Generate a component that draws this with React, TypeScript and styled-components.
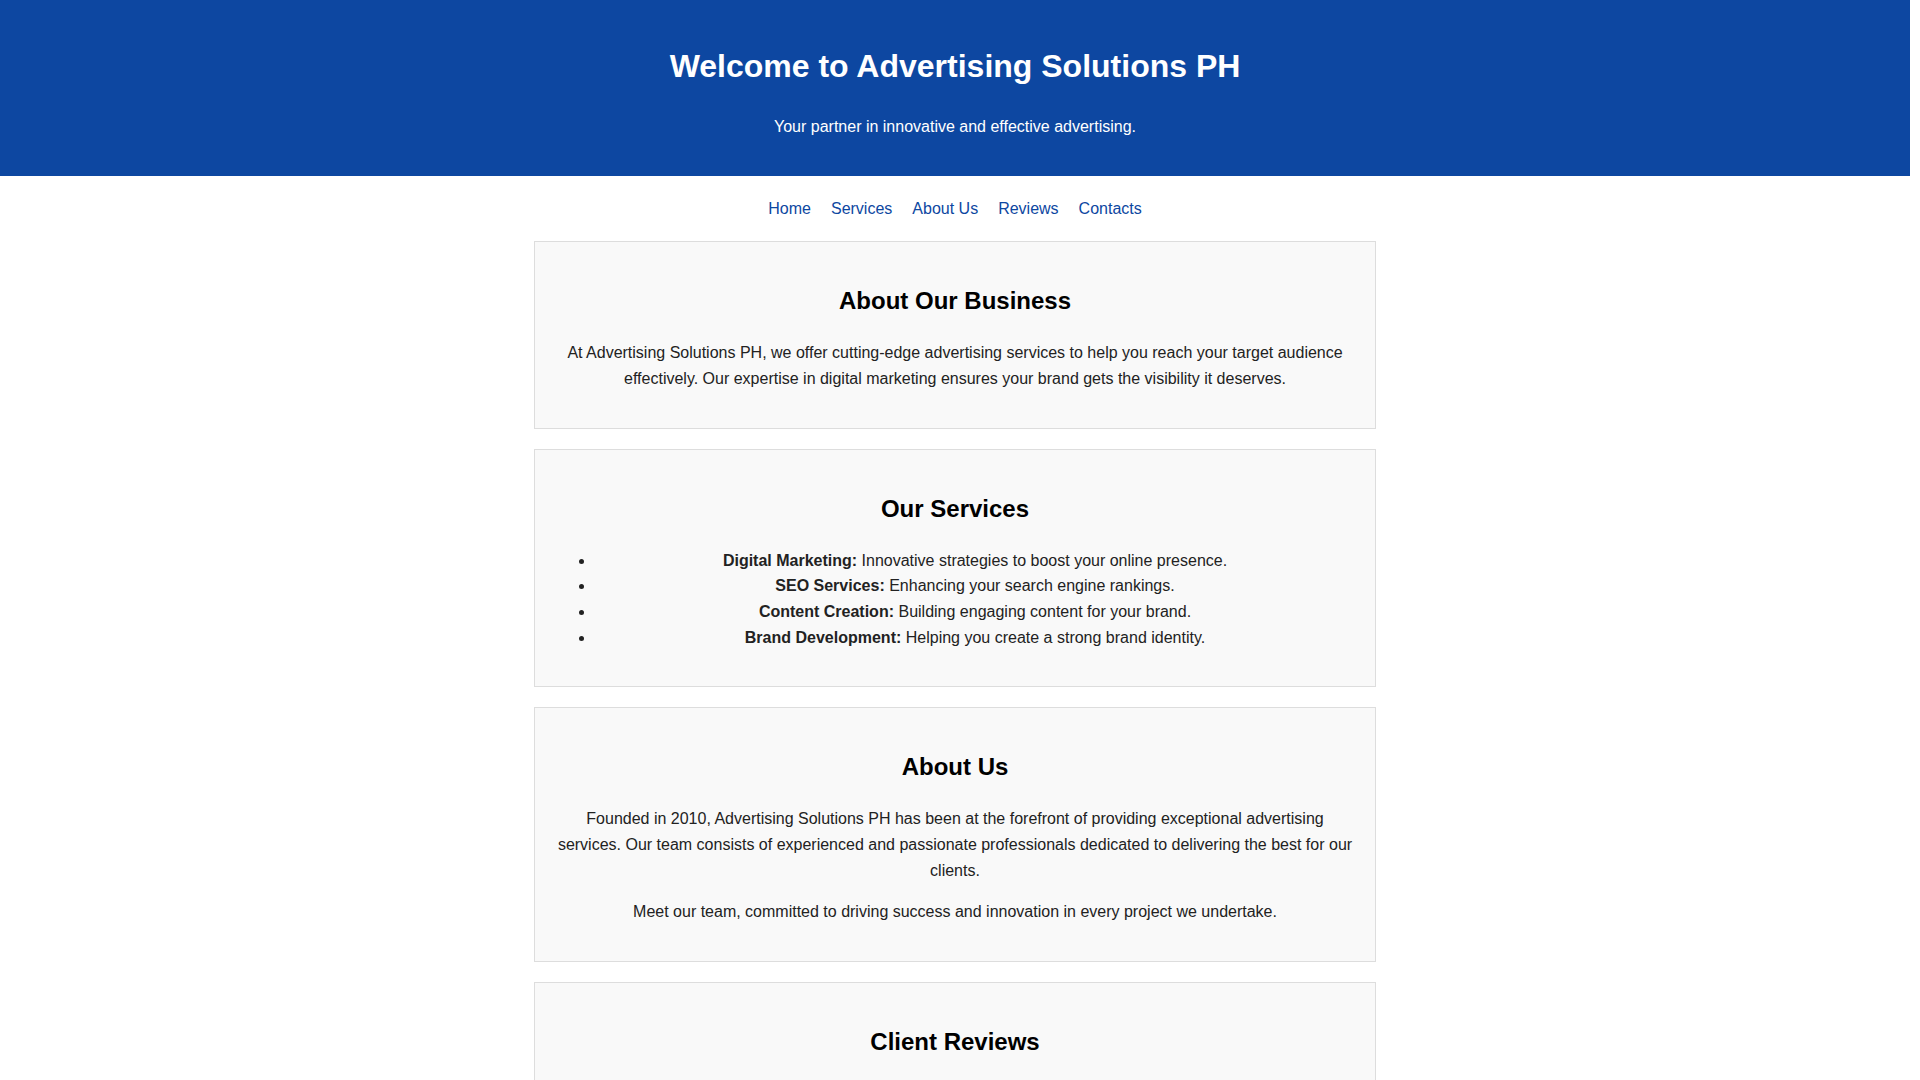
import styled, { createGlobalStyle } from "styled-components";

const GlobalStyle = createGlobalStyle`
  html, body {
    margin: 0;
    padding: 0;
  }
  body {
    font-family: "Liberation Sans", Arial, sans-serif;
    line-height: 1.6;
    color: #222;
    background: #fff;
    padding-right: 10px;
  }
`;

const services = [
  { name: "Digital Marketing:", text: "Innovative strategies to boost your online presence." },
  { name: "SEO Services:", text: "Enhancing your search engine rankings." },
  { name: "Content Creation:", text: "Building engaging content for your brand." },
  { name: "Brand Development:", text: "Helping you create a strong brand identity." },
];

const reviews = [
  { quote: "\"Advertising Solutions PH transformed our online presence. Highly recommended!\"", author: "- Maria Santos" },
  { quote: "\"Their SEO services doubled our website traffic in just three months.\"", author: "- John Reyes" },
  { quote: "\"Creative, professional and always on time. A great partner for our brand.\"", author: "- Angela Cruz" },
];

const navLinks = ["Home", "Services", "About Us", "Reviews", "Contacts"];

export default function App() {
  return (
    <>
      <GlobalStyle />
      <Header>
        <Title>Welcome to Advertising Solutions PH</Title>
        <Tagline>Your partner in innovative and effective advertising.</Tagline>
      </Header>
      <Nav>
        {navLinks.map((link) => (
          <NavLink key={link} href={`#${link.toLowerCase().replace(" ", "-")}`}>
            {link}
          </NavLink>
        ))}
      </Nav>

      <Section id="home">
        <SectionTitle>About Our Business</SectionTitle>
        <p>
          At Advertising Solutions PH, we offer cutting-edge advertising services to help you reach your target
          audience effectively. Our expertise in digital marketing ensures your brand gets the visibility it deserves.
        </p>
      </Section>

      <Section id="services">
        <SectionTitle>Our Services</SectionTitle>
        <ServiceList>
          {services.map((s) => (
            <li key={s.name}>
              <strong>{s.name}</strong> {s.text}
            </li>
          ))}
        </ServiceList>
      </Section>

      <Section id="about-us">
        <SectionTitle>About Us</SectionTitle>
        <p>
          Founded in 2010, Advertising Solutions PH has been at the forefront of providing exceptional advertising
          services. Our team consists of experienced and passionate professionals dedicated to delivering the best for
          our clients.
        </p>
        <p>Meet our team, committed to driving success and innovation in every project we undertake.</p>
      </Section>

      <Section id="reviews">
        <SectionTitle>Client Reviews</SectionTitle>
        {reviews.map((r) => (
          <Review key={r.author}>
            <p>{r.quote}</p>
            <Author>{r.author}</Author>
          </Review>
        ))}
      </Section>

      <Section id="contacts">
        <SectionTitle>Contacts</SectionTitle>
        <p>
          <strong>Address:</strong> 123 Ayala Avenue, Makati City, Philippines
        </p>
        <p>
          <strong>Phone:</strong> +63 912 345 6789
        </p>
        <p>
          <strong>Email:</strong> info@advertisingsolutionsph.com
        </p>
        <p>
          <strong>Office Hours:</strong> Monday - Friday, 9:00 AM - 6:00 PM
        </p>
      </Section>

      <Footer>
        <p>&copy; 2024 Advertising Solutions PH. All rights reserved.</p>
      </Footer>
    </>
  );
}

const Header = styled.header`
  background: #0d47a1;
  color: #fff;
  text-align: center;
  padding: 20px;
`;

const Title = styled.h1`
  font-size: 32px;
  margin: 21.44px 0;
`;

const Tagline = styled.p`
  margin: 16px 0;
`;

const Nav = styled.nav`
  display: flex;
  justify-content: center;
  padding: 20px 0;
`;

const NavLink = styled.a`
  color: #0d47a1;
  text-decoration: none;
  margin: 0 10px;
`;

const Section = styled.section`
  max-width: 800px;
  margin: 0 auto 20px;
  padding: 20px;
  background: #f9f9f9;
  border: 1px solid #ddd;
  text-align: center;
`;

const SectionTitle = styled.h2`
  font-size: 24px;
  margin: 19.92px 0;
  color: #000;
`;

const ServiceList = styled.ul`
  margin: 16px 0;
  padding-left: 40px;
`;

const Review = styled.div`
  margin-bottom: 16px;

  p {
    margin: 8px 0;
  }
`;

const Author = styled.p`
  font-style: italic;
`;

const Footer = styled.footer`
  background: #0d47a1;
  color: #fff;
  text-align: center;
  padding: 20px;
  margin-top: 20px;
`;
